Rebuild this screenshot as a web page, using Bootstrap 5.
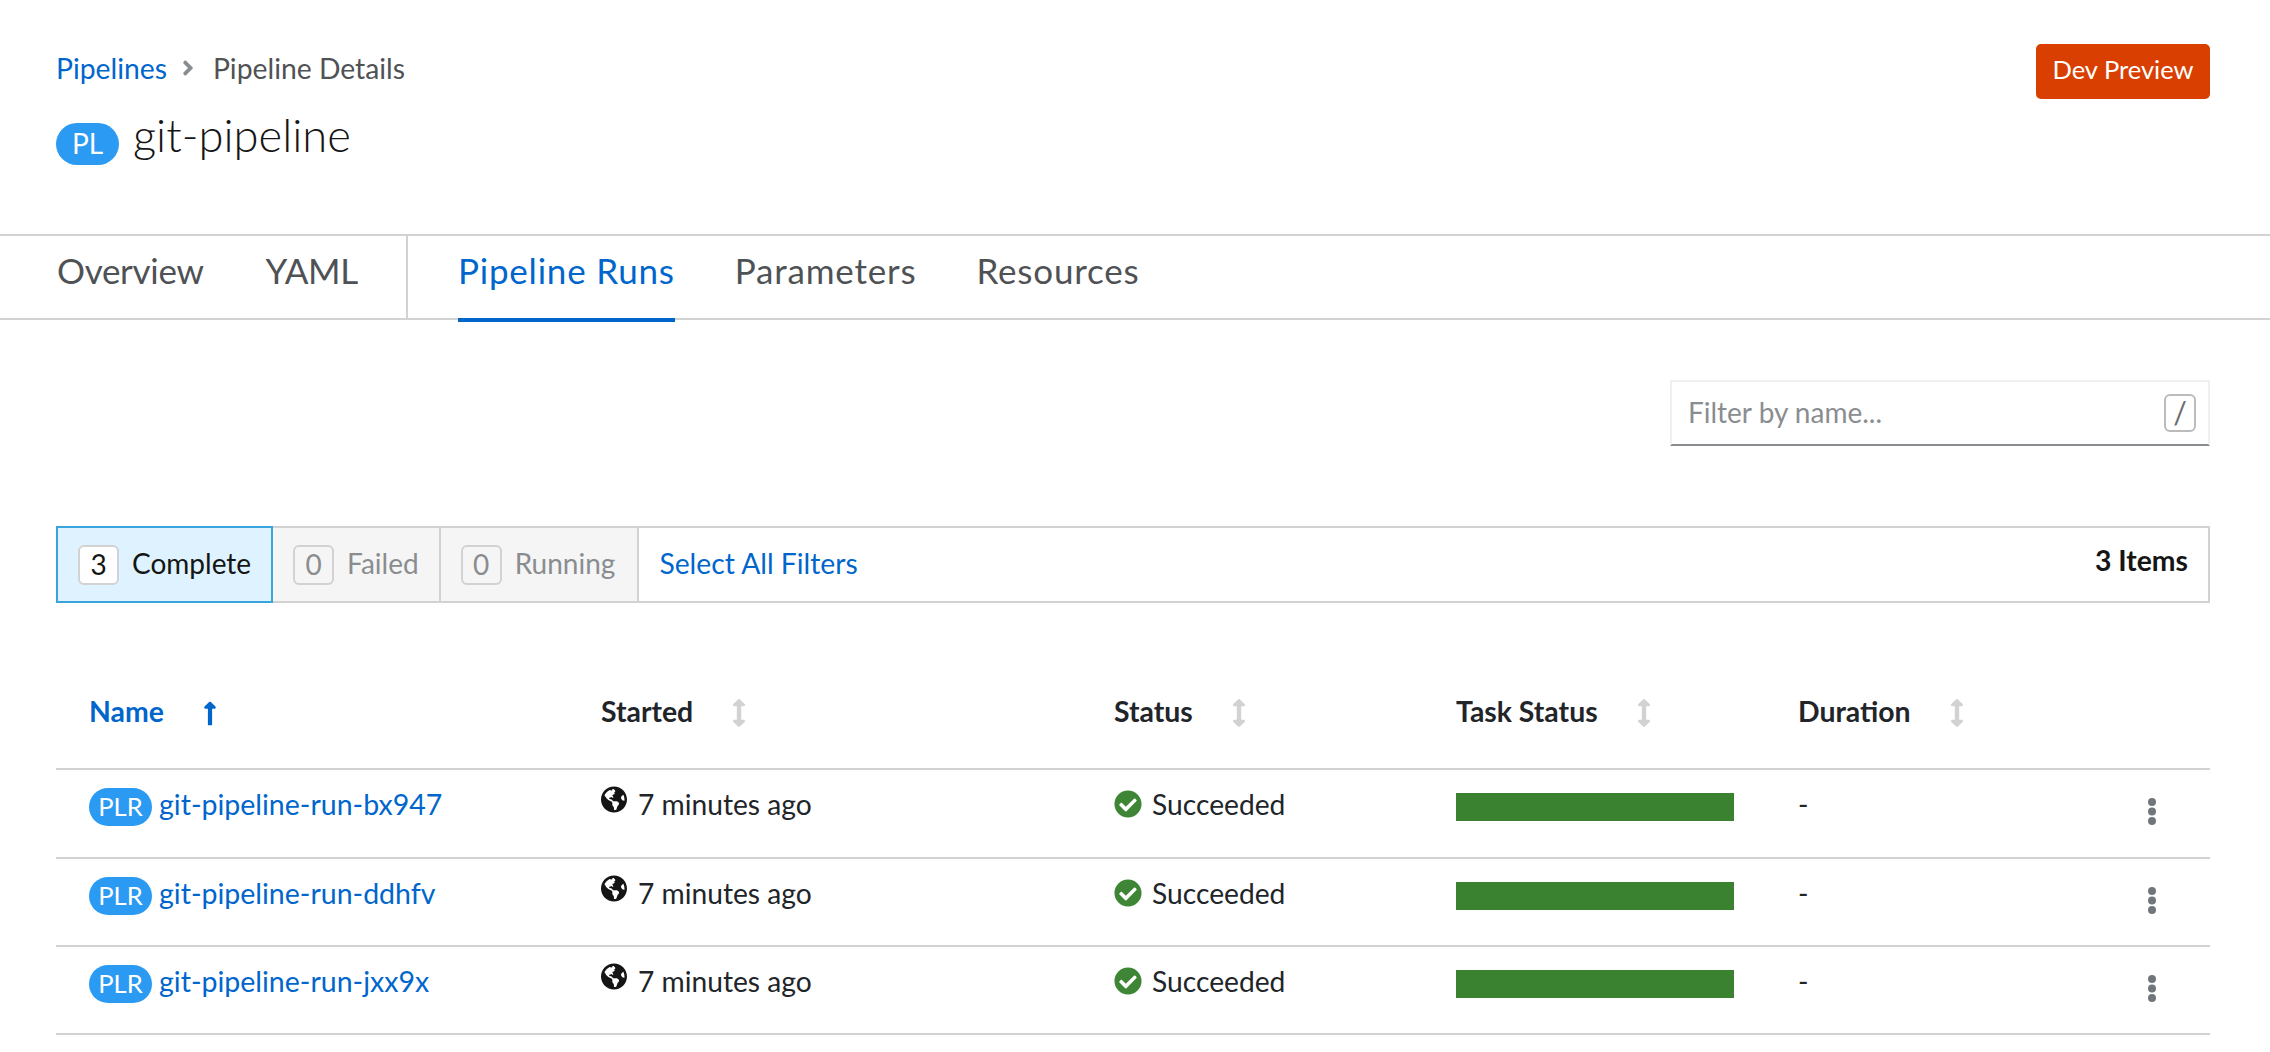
<!DOCTYPE html>
<html lang="en">
<head>
    <meta charset="UTF-8">
    <meta name="viewport" content="width=device-width, initial-scale=1.0">
    <title>git-pipeline - Pipeline Details</title>
    <link href="https://cdn.jsdelivr.net/npm/bootstrap@5.3.0/dist/css/bootstrap.min.css" rel="stylesheet">
    <style>
        body {
            background-color: #fff;
            color: #151515;
            font-family: "Lato", "Liberation Sans", sans-serif;
            font-size: 28px;
            overflow: hidden;
        }
        a { color: #06c; text-decoration: none; }

        /* page header */
        .page-head {
            height: 234px;
            padding: 44px 60px 0 56px;
        }
        .crumbs { font-size: 28.3px; line-height: 48px; margin: 0; }
        .crumbs .crumb-sep { width: 12px; height: 24px; margin: 0 19px 0 15px; fill: #8a8d90; }
        .crumb-now { color: #4f5255; }
        .res-badge {
            background-color: #2b9af3;
            color: #fff;
            font-weight: 400;
            border-radius: 21px;
            width: 63px;
            height: 42px;
            font-size: 28px;
            line-height: 40px;
            padding: 0;
            text-align: center;
            flex: none;
        }
        .res-badge-sm { height: 38px; line-height: 36px; font-size: 25.5px; border-radius: 19px; margin-top: 1px; }
        .page-title { font-size: 45.3px; font-weight: 300; line-height: 56px; margin: -16px 0 0; }
        .title-row { margin-top: 31px; gap: 14px; }
        .dev-btn {
            background-color: #d93f00;
            border: 0;
            color: #fff;
            width: 174px;
            height: 55px;
            font-size: 25.5px;
            padding: 0 0 5px;
            border-radius: 5px;
        }

        /* tabs */
        .tab-strip {
            height: 86px;
            border-top: 2px solid #d2d2d2;
            border-bottom: 2px solid #d2d2d2;
        }
        .tab-group { padding-left: 57px; gap: 62px; height: 84px; letter-spacing: -.3px; }
        .tab-group + .tab-group { border-left: 2px solid #d2d2d2; padding-left: 50px; margin-left: 48px; gap: 60px; letter-spacing: .8px; }
        .tab-link {
            color: #4f5255;
            font-size: 35px;
            height: 84px;
            line-height: 68px;
            padding: 0;
        }
        .tab-link.on { color: #06c; border-bottom: 4px solid #06c; height: 86px; }

        /* filter by name */
        .name-filter-wrap { padding: 60px 60px 0 0; }
        .name-filter {
            width: 540px;
            height: 66px;
            border: 2px solid #f0f0f0;
            border-bottom: 2px solid #8a8d90;
            padding: 0 12px 0 16px;
        }
        .name-filter span { color: #8a8d90; font-size: 28px; margin-bottom: 3px; }
        .slash-key {
            width: 32px;
            height: 38px;
            border: 2px solid #bbb;
            border-radius: 6px;
            color: #6a6e73;
            font-size: 30px;
            line-height: 32px;
            text-align: center;
        }

        /* row filters */
        .filter-bar {
            margin: 80px 60px 0 56px;
            height: 77px;
            border: 2px solid #d2d2d2;
            border-left: 0;
            font-size: 28.3px;
        }
        .filter-chip {
            height: 77px;
            background-color: #f5f5f5;
            border: 2px solid #d2d2d2;
            border-left: 0;
            color: #8a8d90;
            padding: 0 20px;
            gap: 13px;
            font-size: 28px;
        }
        .filter-chip:nth-child(3) { padding-right: 22px; }
        .filter-chip.on {
            background-color: #def3ff;
            border: 2px solid #39a5dc;
            color: #151515;
        }
        .chip-text { margin-bottom: 3px; }
        .chip-count {
            width: 41px;
            height: 40px;
            background-color: transparent;
            border: 2px solid #d2d2d2;
            border-radius: 6px;
            text-align: center;
            line-height: 35px;
        }
        .filter-chip.on .chip-count { background-color: #fff; }
        .select-all { margin: 0 0 3px 20px; }
        .item-count { font-weight: 700; margin: 0 20px 8px auto; }

        /* table */
        .runs-wrap { margin: 51px 60px 0 56px; }
        .runs-table { table-layout: fixed; width: 100%; margin: 0; --bs-table-border-color: #d2d2d2; }
        .runs-table > :not(caption) > * > * { border-bottom-width: 2px; padding: 0; }
        .runs-table th { height: 115px; vertical-align: middle; font-weight: 700; font-size: 28.4px; }
        .runs-table th a { color: #06c; }
        .runs-table td { height: 88px; vertical-align: top; padding-top: 17px; font-size: 28.2px; line-height: 34px; }
        .runs-table tbody tr:first-child td { height: 89px; }
        .runs-table .first-col { padding-left: 33px; }
        .sort-icon { width: 14px; height: 28px; fill: #d2d2d2; margin-left: 39px; vertical-align: -5px; }
        .sort-icon.on { fill: #06c; height: 27px; }
        .cell-line { gap: 7px; }
        .cell-line a { font-size: 28.5px; }
        .globe-icon { width: 26px; height: 27px; fill: #151515; margin: -1px 11px 0 0; flex: none; }
        .check-icon { width: 28px; height: 28px; fill: #3e8635; margin: 3px 10px 0 0; flex: none; }
        .task-bar { height: 28px; width: 278px; background-color: #3a8230; margin-top: 6px; border-radius: 0; }
        .kebab { width: 8px; height: 27px; fill: #72767b; margin: 11px 54px 0 0; }
    </style>
</head>
<body>
    <!-- Page header -->
    <div class="page-head d-flex justify-content-between align-items-start">
        <div>
            <nav class="crumbs d-flex align-items-center">
                <a href="#">Pipelines</a>
                <svg class="crumb-sep" viewBox="0 0 256 512"><path d="M224.3 273l-136 136c-9.4 9.4-24.6 9.4-33.9 0l-22.6-22.6c-9.4-9.4-9.4-24.6 0-33.9l96.4-96.4-96.4-96.4c-9.4-9.4-9.4-24.6 0-33.9L54.3 103c9.4-9.4 24.6-9.4 33.9 0l136 136c9.5 9.4 9.5 24.6.1 34z"/></svg>
                <span class="crumb-now">Pipeline Details</span>
            </nav>
            <div class="title-row d-flex align-items-start">
                <span class="badge res-badge">PL</span>
                <h1 class="page-title">git-pipeline</h1>
            </div>
        </div>
        <button type="button" class="btn dev-btn">Dev Preview</button>
    </div>

    <!-- Tabs -->
    <div class="tab-strip d-flex">
        <div class="tab-group d-flex">
            <a class="tab-link" href="#">Overview</a>
            <a class="tab-link" href="#">YAML</a>
        </div>
        <div class="tab-group d-flex">
            <a class="tab-link on" href="#">Pipeline Runs</a>
            <a class="tab-link" href="#">Parameters</a>
            <a class="tab-link" href="#">Resources</a>
        </div>
    </div>

    <!-- Filter by name -->
    <div class="name-filter-wrap d-flex justify-content-end">
        <div class="name-filter d-flex align-items-center justify-content-between">
            <span>Filter by name...</span>
            <div class="slash-key">/</div>
        </div>
    </div>

    <!-- Row filters -->
    <div class="filter-bar d-flex align-items-center">
        <div class="filter-chip on d-flex align-items-center"><span class="chip-count">3</span><span class="chip-text">Complete</span></div>
        <div class="filter-chip d-flex align-items-center"><span class="chip-count">0</span><span class="chip-text">Failed</span></div>
        <div class="filter-chip d-flex align-items-center"><span class="chip-count">0</span><span class="chip-text">Running</span></div>
        <a class="select-all" href="#">Select All Filters</a>
        <span class="item-count">3 Items</span>
    </div>

    <!-- Pipeline runs -->
    <div class="runs-wrap">
        <table class="table runs-table">
            <colgroup>
                <col style="width: 545px">
                <col style="width: 513px">
                <col style="width: 342px">
                <col style="width: 342px">
                <col>
            </colgroup>
            <thead>
                <tr>
                    <th class="first-col"><a href="#">Name</a><svg class="sort-icon on" viewBox="0 0 256 512"><path d="M88 166.059V468c0 6.627 5.373 12 12 12h56c6.627 0 12-5.373 12-12V166.059h46.059c21.382 0 32.09-25.851 16.971-40.971l-86.059-86.059c-9.373-9.373-24.569-9.373-33.941 0l-86.059 86.059c-15.119 15.119-4.411 40.971 16.971 40.971H88z"/></svg></th>
                    <th>Started<svg class="sort-icon" viewBox="0 0 256 512"><path d="M214.059 377.941H168V134.059h46.059c21.382 0 32.09-25.851 16.971-40.971L144.971 7.029c-9.373-9.373-24.569-9.373-33.941 0L24.971 93.088c-15.119 15.119-4.411 40.971 16.971 40.971H88v243.882H41.941c-21.382 0-32.09 25.851-16.971 40.971l86.059 86.059c9.373 9.373 24.569 9.373 33.941 0l86.059-86.059c15.12-15.119 4.412-40.971-16.97-40.971z"/></svg></th>
                    <th>Status<svg class="sort-icon" viewBox="0 0 256 512"><path d="M214.059 377.941H168V134.059h46.059c21.382 0 32.09-25.851 16.971-40.971L144.971 7.029c-9.373-9.373-24.569-9.373-33.941 0L24.971 93.088c-15.119 15.119-4.411 40.971 16.971 40.971H88v243.882H41.941c-21.382 0-32.09 25.851-16.971 40.971l86.059 86.059c9.373 9.373 24.569 9.373 33.941 0l86.059-86.059c15.12-15.119 4.412-40.971-16.97-40.971z"/></svg></th>
                    <th>Task Status<svg class="sort-icon" viewBox="0 0 256 512"><path d="M214.059 377.941H168V134.059h46.059c21.382 0 32.09-25.851 16.971-40.971L144.971 7.029c-9.373-9.373-24.569-9.373-33.941 0L24.971 93.088c-15.119 15.119-4.411 40.971 16.971 40.971H88v243.882H41.941c-21.382 0-32.09 25.851-16.971 40.971l86.059 86.059c9.373 9.373 24.569 9.373 33.941 0l86.059-86.059c15.12-15.119 4.412-40.971-16.97-40.971z"/></svg></th>
                    <th>Duration<svg class="sort-icon" viewBox="0 0 256 512"><path d="M214.059 377.941H168V134.059h46.059c21.382 0 32.09-25.851 16.971-40.971L144.971 7.029c-9.373-9.373-24.569-9.373-33.941 0L24.971 93.088c-15.119 15.119-4.411 40.971 16.971 40.971H88v243.882H41.941c-21.382 0-32.09 25.851-16.971 40.971l86.059 86.059c9.373 9.373 24.569 9.373 33.941 0l86.059-86.059c15.12-15.119 4.412-40.971-16.97-40.971z"/></svg></th>
                </tr>
            </thead>
            <tbody id="runRows"></tbody>
        </table>
    </div>

    <script src="https://cdn.jsdelivr.net/npm/bootstrap@5.3.0/dist/js/bootstrap.bundle.min.js"></script>
    <script>
        const runs = ['git-pipeline-run-bx947', 'git-pipeline-run-ddhfv', 'git-pipeline-run-jxx9x'];
        const globe = '<svg class="globe-icon" viewBox="0 0 496 512"><path d="M248 8C111.03 8 0 119.03 0 256s111.03 248 248 248 248-111.03 248-248S384.97 8 248 8zm82.29 357.6c-3.9 3.88-7.99 7.95-11.31 11.28-2.99 3-5.1 6.7-6.17 10.71-1.51 5.66-2.73 11.38-4.77 16.87l-17.39 46.85c-13.76 3-28 4.69-42.65 4.69v-27.38c1.69-12.62-7.64-36.26-22.63-51.25-6-6-9.37-14.14-9.37-22.63v-32.01c0-11.64-6.27-22.34-16.46-27.97-14.37-7.95-34.81-19.06-48.81-26.11-11.48-5.78-22.1-13.14-31.65-21.75l-.8-.72a114.792 114.792 0 0 1-18.06-20.74c-9.38-13.77-24.66-36.42-34.59-51.14 20.47-45.5 57.36-82.04 103.2-101.89l24.01 12.01C203.48 89.74 216 82.01 216 70.11v-11.3c7.99-1.29 16.12-2.11 24.39-2.42l28.3 28.3c6.25 6.25 6.25 16.38 0 22.63L264 112l-10.34 10.34c-3.12 3.12-3.12 8.19 0 11.31l4.69 4.69c3.12 3.12 3.12 8.19 0 11.31l-8 8a8.008 8.008 0 0 1-5.66 2.34h-8.99c-2.08 0-4.08.81-5.58 2.27l-9.92 9.65a8.008 8.008 0 0 0-1.58 9.31l15.59 31.19c2.66 5.32-1.21 11.58-7.15 11.58h-5.64c-1.93 0-3.79-.7-5.24-1.96l-9.28-8.06a16.017 16.017 0 0 0-15.55-3.1l-31.17 10.39a11.95 11.95 0 0 0-8.17 11.34c0 4.53 2.56 8.66 6.61 10.69l11.08 5.54c9.41 4.71 19.79 7.16 30.31 7.16s22.59 27.29 32 32h66.75c8.49 0 16.62 3.37 22.63 9.37l13.69 13.69a30.503 30.503 0 0 1 8.93 21.57 46.536 46.536 0 0 1-13.72 32.98zM417 274.25c-5.79-1.45-10.84-5-14.15-9.97l-17.98-26.97a23.97 23.97 0 0 1 0-26.62l19.59-29.38c2.32-3.47 5.5-6.29 9.24-8.15l12.98-6.49C440.2 193.59 448 223.87 448 256c0 8.67-.74 17.16-1.82 25.54L417 274.25z"/></svg>';
        const check = '<svg class="check-icon" viewBox="0 0 512 512"><path d="M504 256c0 136.967-111.033 248-248 248S8 392.967 8 256 119.033 8 256 8s248 111.033 248 248zM227.314 387.314l184-184c6.248-6.248 6.248-16.379 0-22.627l-22.627-22.627c-6.248-6.249-16.379-6.249-22.628 0L216 308.118l-70.059-70.059c-6.248-6.248-16.379-6.248-22.628 0l-22.627 22.627c-6.248 6.248-6.248 16.379 0 22.627l104 104c6.249 6.249 16.379 6.249 22.628 0z"/></svg>';

        // Build the rows
        document.getElementById('runRows').innerHTML = runs.map(name => `
            <tr>
                <td class="first-col"><div class="cell-line d-flex align-items-start"><span class="badge res-badge res-badge-sm">PLR</span><a href="#">${name}</a></div></td>
                <td><div class="d-flex align-items-start">${globe}7 minutes ago</div></td>
                <td><div class="d-flex align-items-start">${check}Succeeded</div></td>
                <td><div class="task-bar"></div></td>
                <td>
                    <div class="d-flex justify-content-between align-items-start">
                        <span>-</span>
                        <svg class="kebab" viewBox="0 0 8 27"><circle cx="4" cy="4" r="4"/><circle cx="4" cy="13.5" r="4"/><circle cx="4" cy="23" r="4"/></svg>
                    </div>
                </td>
            </tr>
        `).join('');
    </script>
</body>
</html>
